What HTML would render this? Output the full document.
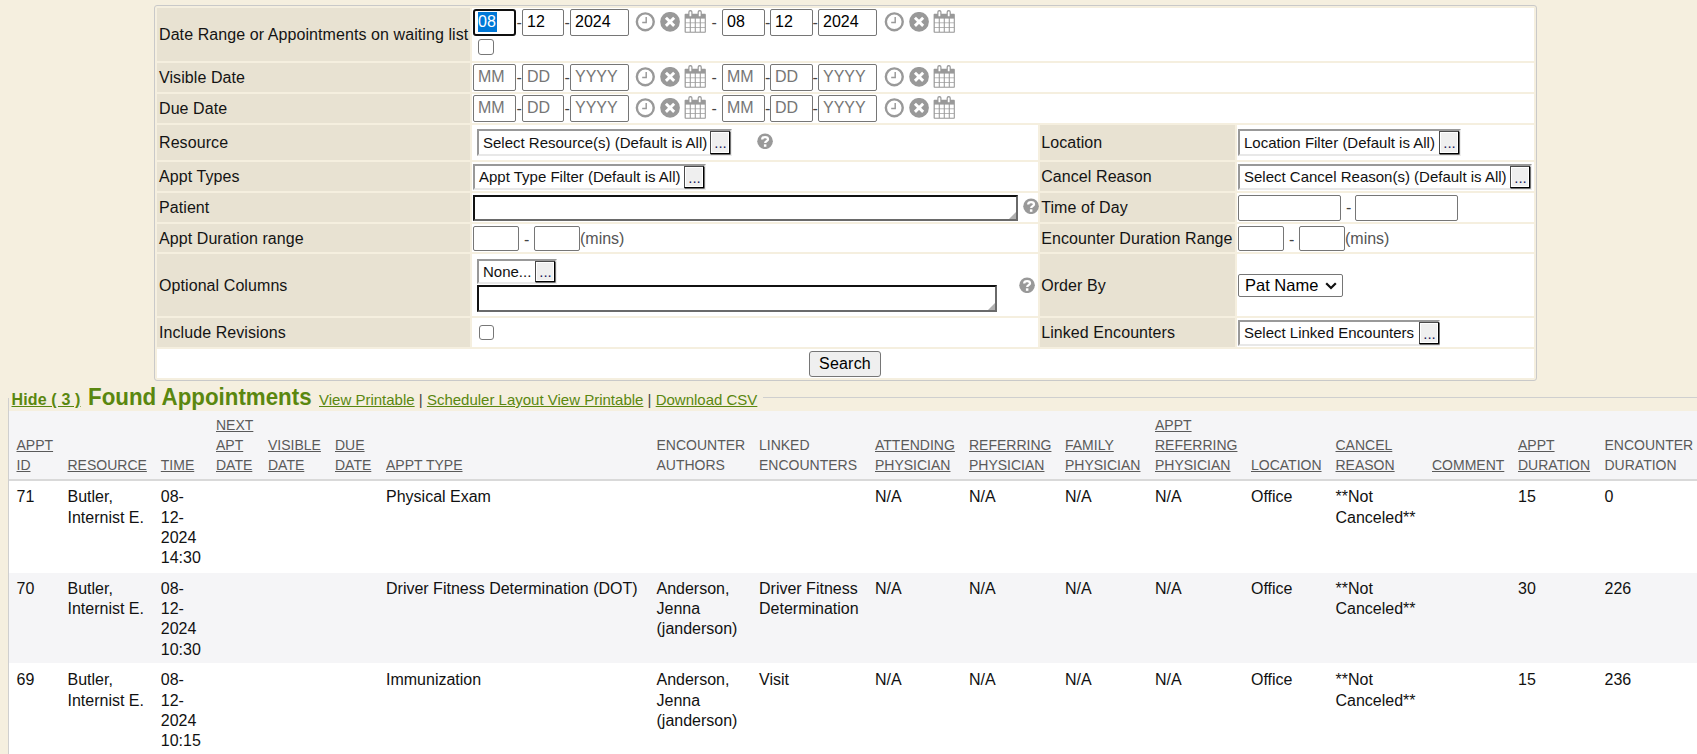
<!DOCTYPE html><html><head><meta charset="utf-8"><style>
*{box-sizing:border-box}
html,body{margin:0;padding:0}
body{width:1697px;height:754px;overflow:hidden;position:relative;background:#f5efdf;font-family:"Liberation Sans",sans-serif;color:#111}
.a{position:absolute}
.frm{position:absolute;left:154px;top:5px;width:1383px;height:376px;border:1px solid #c9c9c9;border-radius:3px;background:#f5efdf}
.lab{position:absolute;background:#e8e2d2;font-size:16px;padding-left:2px;letter-spacing:0.08px;display:flex;align-items:center;white-space:nowrap;color:#141414}
.val{position:absolute;background:#fff}
.inp{position:absolute;border:1px solid #767676;border-radius:2px;background:#fff;font-size:16px;line-height:23px;padding-left:4px;color:#000;white-space:nowrap;overflow:hidden}
.ph{color:#767676}
.dash{position:absolute;font-size:16px;line-height:16px;color:#444}
.wid{position:absolute;border-top:2px solid #999;border-left:2px solid #999;border-right:2px solid #eee;border-bottom:2px solid #e8e8e8;background:#fff;font-size:15px;white-space:nowrap;color:#111}
.btn{position:absolute;background:#efefef;border-top:1px solid #4a4a4a;border-left:1px solid #4a4a4a;border-right:1px solid #000;border-bottom:1px solid #000;box-shadow:inset 1px 1px 0 #fff,inset -1px -1px 0 #fff,0.6px 0.6px 0 #222;font-size:15px;color:#1a1a5a;text-align:center;padding-left:1px}
.txa{position:absolute;border-top:2px solid #111;border-left:2px solid #111;border-right:2px solid #6a6a6a;border-bottom:2px solid #6a6a6a;background:#fff}
.cb{position:absolute;width:16px;height:16px;border:1.3px solid #777;border-radius:3px;background:#fff}
.ico{position:absolute}
.lnk{color:#5a870f;text-decoration:underline}
.th{position:absolute;font-size:14px;line-height:20px;color:#5a5a5a;white-space:nowrap}
.th u{text-decoration:underline}
.td{position:absolute;font-size:16px;line-height:20.33px;color:#111;white-space:nowrap}
</style></head><body>
<div class="frm"></div>
<div class="lab" style="left:157px;top:8px;width:313px;height:53px;">Date Range or Appointments on waiting list</div>
<div class="val" style="left:472px;top:8px;width:1062px;height:53px"></div>
<div class="lab" style="left:157px;top:63px;width:313px;height:29px;">Visible Date</div>
<div class="val" style="left:472px;top:63px;width:1062px;height:29px"></div>
<div class="lab" style="left:157px;top:94px;width:313px;height:29px;">Due Date</div>
<div class="val" style="left:472px;top:94px;width:1062px;height:29px"></div>
<div class="lab" style="left:157px;top:125px;width:313px;height:35px;">Resource</div>
<div class="val" style="left:472px;top:125px;width:566px;height:35px"></div>
<div class="lab" style="left:1040px;top:125px;width:195px;height:35px;padding-left:1.2px;">Location</div>
<div class="val" style="left:1237px;top:125px;width:297px;height:35px"></div>
<div class="lab" style="left:157px;top:162px;width:313px;height:29px;">Appt Types</div>
<div class="val" style="left:472px;top:162px;width:566px;height:29px"></div>
<div class="lab" style="left:1040px;top:162px;width:195px;height:29px;padding-left:1.2px;">Cancel Reason</div>
<div class="val" style="left:1237px;top:162px;width:297px;height:29px"></div>
<div class="lab" style="left:157px;top:193px;width:313px;height:29px;">Patient</div>
<div class="val" style="left:472px;top:193px;width:566px;height:29px"></div>
<div class="lab" style="left:1040px;top:193px;width:195px;height:29px;padding-left:1.2px;">Time of Day</div>
<div class="val" style="left:1237px;top:193px;width:297px;height:29px"></div>
<div class="lab" style="left:157px;top:224px;width:313px;height:28px;padding-top:1px;">Appt Duration range</div>
<div class="val" style="left:472px;top:224px;width:566px;height:28px"></div>
<div class="lab" style="left:1040px;top:224px;width:195px;height:28px;padding-left:1.2px;padding-top:1px;">Encounter Duration Range</div>
<div class="val" style="left:1237px;top:224px;width:297px;height:28px"></div>
<div class="lab" style="left:157px;top:254px;width:313px;height:62px;padding-top:1px;">Optional Columns</div>
<div class="val" style="left:472px;top:254px;width:566px;height:62px"></div>
<div class="lab" style="left:1040px;top:254px;width:195px;height:62px;padding-left:1.2px;padding-top:1px;">Order By</div>
<div class="val" style="left:1237px;top:254px;width:297px;height:62px"></div>
<div class="lab" style="left:157px;top:318px;width:313px;height:29px;">Include Revisions</div>
<div class="val" style="left:472px;top:318px;width:566px;height:29px"></div>
<div class="lab" style="left:1040px;top:318px;width:195px;height:29px;padding-left:1.2px;">Linked Encounters</div>
<div class="val" style="left:1237px;top:318px;width:297px;height:29px"></div>
<div class="val" style="left:157px;top:349px;width:1377px;height:29px"></div>
<div class="inp" style="left:473px;top:9px;width:43px;height:27px;border:2px solid #101010;border-radius:3px;padding-left:3px;line-height:21px"><span style="background:#0078d7;color:#fff;display:inline-block;height:20px;line-height:19px;vertical-align:top;margin-top:1px;padding-right:1px">08</span></div><div class="inp" style="left:522px;top:9px;width:42px;height:27px">12</div><div class="inp" style="left:570px;top:9px;width:59px;height:27px">2024</div><div class="dash" style="left:516.5px;top:15px">-</div><div class="dash" style="left:564.5px;top:15px">-</div><svg class="ico" style="left:635.0px;top:12px" width="21" height="21" viewBox="0 0 21 21"><circle cx="10.3" cy="9.8" r="8.45" fill="none" stroke="#999" stroke-width="2.4"/><path d="M11.2 5.1V10.5H7.2" fill="none" stroke="#999" stroke-width="1.45"/></svg><svg class="ico" style="left:660.0px;top:12px" width="21" height="21" viewBox="0 0 21 21"><circle cx="10.05" cy="9.8" r="9.85" fill="#999"/><path d="M5.95 5.7L14.15 13.9M14.15 5.7L5.95 13.9" stroke="#fff" stroke-width="2.9"/></svg><svg class="ico" style="left:684.0px;top:10px" width="23" height="24" viewBox="0 0 23 24"><rect x="0.6" y="3.84" width="21.25" height="18.86" fill="#999" rx="0.8"/><rect x="1.80" y="8.60" width="3.95" height="3.9" fill="#fff"/><rect x="6.80" y="8.60" width="3.95" height="3.9" fill="#fff"/><rect x="11.80" y="8.60" width="3.95" height="3.9" fill="#fff"/><rect x="16.80" y="8.60" width="3.95" height="3.9" fill="#fff"/><rect x="1.80" y="13.20" width="3.95" height="3.9" fill="#fff"/><rect x="6.80" y="13.20" width="3.95" height="3.9" fill="#fff"/><rect x="11.80" y="13.20" width="3.95" height="3.9" fill="#fff"/><rect x="16.80" y="13.20" width="3.95" height="3.9" fill="#fff"/><rect x="1.80" y="17.80" width="3.95" height="3.9" fill="#fff"/><rect x="6.80" y="17.80" width="3.95" height="3.9" fill="#fff"/><rect x="11.80" y="17.80" width="3.95" height="3.9" fill="#fff"/><rect x="16.80" y="17.80" width="3.95" height="3.9" fill="#fff"/><rect x="4.30" y="0" width="4.2" height="6.8" rx="2.0" fill="#999"/><rect x="5.50" y="1.6" width="1.8" height="4.6" rx="0.3" fill="#fff"/><rect x="13.60" y="0" width="4.2" height="6.8" rx="2.0" fill="#999"/><rect x="14.80" y="1.6" width="1.8" height="4.6" rx="0.3" fill="#fff"/></svg><div class="dash" style="left:711.5px;top:15px">-</div><div class="inp" style="left:722px;top:9px;width:43px;height:27px">08</div><div class="inp" style="left:770px;top:9px;width:43px;height:27px">12</div><div class="inp" style="left:818px;top:9px;width:59px;height:27px">2024</div><div class="dash" style="left:765.0px;top:15px">-</div><div class="dash" style="left:812.5px;top:15px">-</div><svg class="ico" style="left:883.5px;top:12px" width="21" height="21" viewBox="0 0 21 21"><circle cx="10.3" cy="9.8" r="8.45" fill="none" stroke="#999" stroke-width="2.4"/><path d="M11.2 5.1V10.5H7.2" fill="none" stroke="#999" stroke-width="1.45"/></svg><svg class="ico" style="left:908.5px;top:12px" width="21" height="21" viewBox="0 0 21 21"><circle cx="10.05" cy="9.8" r="9.85" fill="#999"/><path d="M5.95 5.7L14.15 13.9M14.15 5.7L5.95 13.9" stroke="#fff" stroke-width="2.9"/></svg><svg class="ico" style="left:932.5px;top:10px" width="23" height="24" viewBox="0 0 23 24"><rect x="0.6" y="3.84" width="21.25" height="18.86" fill="#999" rx="0.8"/><rect x="1.80" y="8.60" width="3.95" height="3.9" fill="#fff"/><rect x="6.80" y="8.60" width="3.95" height="3.9" fill="#fff"/><rect x="11.80" y="8.60" width="3.95" height="3.9" fill="#fff"/><rect x="16.80" y="8.60" width="3.95" height="3.9" fill="#fff"/><rect x="1.80" y="13.20" width="3.95" height="3.9" fill="#fff"/><rect x="6.80" y="13.20" width="3.95" height="3.9" fill="#fff"/><rect x="11.80" y="13.20" width="3.95" height="3.9" fill="#fff"/><rect x="16.80" y="13.20" width="3.95" height="3.9" fill="#fff"/><rect x="1.80" y="17.80" width="3.95" height="3.9" fill="#fff"/><rect x="6.80" y="17.80" width="3.95" height="3.9" fill="#fff"/><rect x="11.80" y="17.80" width="3.95" height="3.9" fill="#fff"/><rect x="16.80" y="17.80" width="3.95" height="3.9" fill="#fff"/><rect x="4.30" y="0" width="4.2" height="6.8" rx="2.0" fill="#999"/><rect x="5.50" y="1.6" width="1.8" height="4.6" rx="0.3" fill="#fff"/><rect x="13.60" y="0" width="4.2" height="6.8" rx="2.0" fill="#999"/><rect x="14.80" y="1.6" width="1.8" height="4.6" rx="0.3" fill="#fff"/></svg>
<div class="inp ph" style="left:473px;top:64px;width:43px;height:27px">MM</div><div class="inp ph" style="left:522px;top:64px;width:42px;height:27px">DD</div><div class="inp ph" style="left:570px;top:64px;width:59px;height:27px">YYYY</div><div class="dash" style="left:516.5px;top:70px">-</div><div class="dash" style="left:564.5px;top:70px">-</div><svg class="ico" style="left:635.0px;top:67px" width="21" height="21" viewBox="0 0 21 21"><circle cx="10.3" cy="9.8" r="8.45" fill="none" stroke="#999" stroke-width="2.4"/><path d="M11.2 5.1V10.5H7.2" fill="none" stroke="#999" stroke-width="1.45"/></svg><svg class="ico" style="left:660.0px;top:67px" width="21" height="21" viewBox="0 0 21 21"><circle cx="10.05" cy="9.8" r="9.85" fill="#999"/><path d="M5.95 5.7L14.15 13.9M14.15 5.7L5.95 13.9" stroke="#fff" stroke-width="2.9"/></svg><svg class="ico" style="left:684.0px;top:65px" width="23" height="24" viewBox="0 0 23 24"><rect x="0.6" y="3.84" width="21.25" height="18.86" fill="#999" rx="0.8"/><rect x="1.80" y="8.60" width="3.95" height="3.9" fill="#fff"/><rect x="6.80" y="8.60" width="3.95" height="3.9" fill="#fff"/><rect x="11.80" y="8.60" width="3.95" height="3.9" fill="#fff"/><rect x="16.80" y="8.60" width="3.95" height="3.9" fill="#fff"/><rect x="1.80" y="13.20" width="3.95" height="3.9" fill="#fff"/><rect x="6.80" y="13.20" width="3.95" height="3.9" fill="#fff"/><rect x="11.80" y="13.20" width="3.95" height="3.9" fill="#fff"/><rect x="16.80" y="13.20" width="3.95" height="3.9" fill="#fff"/><rect x="1.80" y="17.80" width="3.95" height="3.9" fill="#fff"/><rect x="6.80" y="17.80" width="3.95" height="3.9" fill="#fff"/><rect x="11.80" y="17.80" width="3.95" height="3.9" fill="#fff"/><rect x="16.80" y="17.80" width="3.95" height="3.9" fill="#fff"/><rect x="4.30" y="0" width="4.2" height="6.8" rx="2.0" fill="#999"/><rect x="5.50" y="1.6" width="1.8" height="4.6" rx="0.3" fill="#fff"/><rect x="13.60" y="0" width="4.2" height="6.8" rx="2.0" fill="#999"/><rect x="14.80" y="1.6" width="1.8" height="4.6" rx="0.3" fill="#fff"/></svg><div class="dash" style="left:711.5px;top:70px">-</div><div class="inp ph" style="left:722px;top:64px;width:43px;height:27px">MM</div><div class="inp ph" style="left:770px;top:64px;width:43px;height:27px">DD</div><div class="inp ph" style="left:818px;top:64px;width:59px;height:27px">YYYY</div><div class="dash" style="left:765.0px;top:70px">-</div><div class="dash" style="left:812.5px;top:70px">-</div><svg class="ico" style="left:883.5px;top:67px" width="21" height="21" viewBox="0 0 21 21"><circle cx="10.3" cy="9.8" r="8.45" fill="none" stroke="#999" stroke-width="2.4"/><path d="M11.2 5.1V10.5H7.2" fill="none" stroke="#999" stroke-width="1.45"/></svg><svg class="ico" style="left:908.5px;top:67px" width="21" height="21" viewBox="0 0 21 21"><circle cx="10.05" cy="9.8" r="9.85" fill="#999"/><path d="M5.95 5.7L14.15 13.9M14.15 5.7L5.95 13.9" stroke="#fff" stroke-width="2.9"/></svg><svg class="ico" style="left:932.5px;top:65px" width="23" height="24" viewBox="0 0 23 24"><rect x="0.6" y="3.84" width="21.25" height="18.86" fill="#999" rx="0.8"/><rect x="1.80" y="8.60" width="3.95" height="3.9" fill="#fff"/><rect x="6.80" y="8.60" width="3.95" height="3.9" fill="#fff"/><rect x="11.80" y="8.60" width="3.95" height="3.9" fill="#fff"/><rect x="16.80" y="8.60" width="3.95" height="3.9" fill="#fff"/><rect x="1.80" y="13.20" width="3.95" height="3.9" fill="#fff"/><rect x="6.80" y="13.20" width="3.95" height="3.9" fill="#fff"/><rect x="11.80" y="13.20" width="3.95" height="3.9" fill="#fff"/><rect x="16.80" y="13.20" width="3.95" height="3.9" fill="#fff"/><rect x="1.80" y="17.80" width="3.95" height="3.9" fill="#fff"/><rect x="6.80" y="17.80" width="3.95" height="3.9" fill="#fff"/><rect x="11.80" y="17.80" width="3.95" height="3.9" fill="#fff"/><rect x="16.80" y="17.80" width="3.95" height="3.9" fill="#fff"/><rect x="4.30" y="0" width="4.2" height="6.8" rx="2.0" fill="#999"/><rect x="5.50" y="1.6" width="1.8" height="4.6" rx="0.3" fill="#fff"/><rect x="13.60" y="0" width="4.2" height="6.8" rx="2.0" fill="#999"/><rect x="14.80" y="1.6" width="1.8" height="4.6" rx="0.3" fill="#fff"/></svg>
<div class="inp ph" style="left:473px;top:95px;width:43px;height:27px">MM</div><div class="inp ph" style="left:522px;top:95px;width:42px;height:27px">DD</div><div class="inp ph" style="left:570px;top:95px;width:59px;height:27px">YYYY</div><div class="dash" style="left:516.5px;top:101px">-</div><div class="dash" style="left:564.5px;top:101px">-</div><svg class="ico" style="left:635.0px;top:98px" width="21" height="21" viewBox="0 0 21 21"><circle cx="10.3" cy="9.8" r="8.45" fill="none" stroke="#999" stroke-width="2.4"/><path d="M11.2 5.1V10.5H7.2" fill="none" stroke="#999" stroke-width="1.45"/></svg><svg class="ico" style="left:660.0px;top:98px" width="21" height="21" viewBox="0 0 21 21"><circle cx="10.05" cy="9.8" r="9.85" fill="#999"/><path d="M5.95 5.7L14.15 13.9M14.15 5.7L5.95 13.9" stroke="#fff" stroke-width="2.9"/></svg><svg class="ico" style="left:684.0px;top:96px" width="23" height="24" viewBox="0 0 23 24"><rect x="0.6" y="3.84" width="21.25" height="18.86" fill="#999" rx="0.8"/><rect x="1.80" y="8.60" width="3.95" height="3.9" fill="#fff"/><rect x="6.80" y="8.60" width="3.95" height="3.9" fill="#fff"/><rect x="11.80" y="8.60" width="3.95" height="3.9" fill="#fff"/><rect x="16.80" y="8.60" width="3.95" height="3.9" fill="#fff"/><rect x="1.80" y="13.20" width="3.95" height="3.9" fill="#fff"/><rect x="6.80" y="13.20" width="3.95" height="3.9" fill="#fff"/><rect x="11.80" y="13.20" width="3.95" height="3.9" fill="#fff"/><rect x="16.80" y="13.20" width="3.95" height="3.9" fill="#fff"/><rect x="1.80" y="17.80" width="3.95" height="3.9" fill="#fff"/><rect x="6.80" y="17.80" width="3.95" height="3.9" fill="#fff"/><rect x="11.80" y="17.80" width="3.95" height="3.9" fill="#fff"/><rect x="16.80" y="17.80" width="3.95" height="3.9" fill="#fff"/><rect x="4.30" y="0" width="4.2" height="6.8" rx="2.0" fill="#999"/><rect x="5.50" y="1.6" width="1.8" height="4.6" rx="0.3" fill="#fff"/><rect x="13.60" y="0" width="4.2" height="6.8" rx="2.0" fill="#999"/><rect x="14.80" y="1.6" width="1.8" height="4.6" rx="0.3" fill="#fff"/></svg><div class="dash" style="left:711.5px;top:101px">-</div><div class="inp ph" style="left:722px;top:95px;width:43px;height:27px">MM</div><div class="inp ph" style="left:770px;top:95px;width:43px;height:27px">DD</div><div class="inp ph" style="left:818px;top:95px;width:59px;height:27px">YYYY</div><div class="dash" style="left:765.0px;top:101px">-</div><div class="dash" style="left:812.5px;top:101px">-</div><svg class="ico" style="left:883.5px;top:98px" width="21" height="21" viewBox="0 0 21 21"><circle cx="10.3" cy="9.8" r="8.45" fill="none" stroke="#999" stroke-width="2.4"/><path d="M11.2 5.1V10.5H7.2" fill="none" stroke="#999" stroke-width="1.45"/></svg><svg class="ico" style="left:908.5px;top:98px" width="21" height="21" viewBox="0 0 21 21"><circle cx="10.05" cy="9.8" r="9.85" fill="#999"/><path d="M5.95 5.7L14.15 13.9M14.15 5.7L5.95 13.9" stroke="#fff" stroke-width="2.9"/></svg><svg class="ico" style="left:932.5px;top:96px" width="23" height="24" viewBox="0 0 23 24"><rect x="0.6" y="3.84" width="21.25" height="18.86" fill="#999" rx="0.8"/><rect x="1.80" y="8.60" width="3.95" height="3.9" fill="#fff"/><rect x="6.80" y="8.60" width="3.95" height="3.9" fill="#fff"/><rect x="11.80" y="8.60" width="3.95" height="3.9" fill="#fff"/><rect x="16.80" y="8.60" width="3.95" height="3.9" fill="#fff"/><rect x="1.80" y="13.20" width="3.95" height="3.9" fill="#fff"/><rect x="6.80" y="13.20" width="3.95" height="3.9" fill="#fff"/><rect x="11.80" y="13.20" width="3.95" height="3.9" fill="#fff"/><rect x="16.80" y="13.20" width="3.95" height="3.9" fill="#fff"/><rect x="1.80" y="17.80" width="3.95" height="3.9" fill="#fff"/><rect x="6.80" y="17.80" width="3.95" height="3.9" fill="#fff"/><rect x="11.80" y="17.80" width="3.95" height="3.9" fill="#fff"/><rect x="16.80" y="17.80" width="3.95" height="3.9" fill="#fff"/><rect x="4.30" y="0" width="4.2" height="6.8" rx="2.0" fill="#999"/><rect x="5.50" y="1.6" width="1.8" height="4.6" rx="0.3" fill="#fff"/><rect x="13.60" y="0" width="4.2" height="6.8" rx="2.0" fill="#999"/><rect x="14.80" y="1.6" width="1.8" height="4.6" rx="0.3" fill="#fff"/></svg>
<div class="cb" style="left:478px;top:39px"></div>
<div class="wid" style="left:477px;top:129px;width:255px;height:27px"><span class="a" style="left:4px;top:3px;line-height:17px">Select Resource(s) (Default is All)</span><div class="btn" style="left:231px;top:0px;width:20px;height:23px;line-height:22px">...</div></div>
<svg class="ico" style="left:757px;top:133px" width="16" height="16" viewBox="0 0 16 16"><circle cx="8.05" cy="8.3" r="7.8" fill="#999"/><path d="M5.2 6.4C5.2 4.8 6.6 4.2 8.1 4.2C9.8 4.2 11.0 5.0 11.0 6.4C11.0 8.0 8.2 8.3 8.2 10.0" fill="none" stroke="#fff" stroke-width="2.3"/><rect x="6.9" y="11.3" width="2.5" height="2.5" fill="#fff"/></svg>
<div class="wid" style="left:473px;top:164px;width:233px;height:26px"><span class="a" style="left:4px;top:2px;line-height:17px">Appt Type Filter (Default is All)</span><div class="btn" style="left:209px;top:0px;width:20px;height:22px;line-height:21px">...</div></div>
<div class="txa" style="left:473px;top:195px;width:545px;height:26px"><svg class="a" style="right:0;bottom:0" width="7" height="7"><path d="M7 0V7H0Z" fill="#b0b0b0"/></svg></div>
<svg class="ico" style="left:1022.7px;top:198.2px" width="16" height="16" viewBox="0 0 16 16"><circle cx="8.05" cy="8.3" r="7.8" fill="#999"/><path d="M5.2 6.4C5.2 4.8 6.6 4.2 8.1 4.2C9.8 4.2 11.0 5.0 11.0 6.4C11.0 8.0 8.2 8.3 8.2 10.0" fill="none" stroke="#fff" stroke-width="2.3"/><rect x="6.9" y="11.3" width="2.5" height="2.5" fill="#fff"/></svg>
<div class="inp" style="left:473px;top:226px;width:46px;height:25px"></div>
<div class="dash" style="left:524px;top:232px">-</div>
<div class="inp" style="left:534px;top:226px;width:46px;height:25px"></div>
<div class="a" style="left:580px;top:230px;font-size:16px;line-height:17px;color:#555">(mins)</div>
<div class="wid" style="left:477px;top:259px;width:80px;height:25px"><span class="a" style="left:4px;top:2px;line-height:17px">None...</span><div class="btn" style="left:56px;top:0px;width:20px;height:21px;line-height:20px">...</div></div>
<div class="txa" style="left:477px;top:285px;width:520px;height:27px"><svg class="a" style="right:0;bottom:0" width="7" height="7"><path d="M7 0V7H0Z" fill="#b0b0b0"/></svg></div>
<svg class="ico" style="left:1019px;top:277px" width="16" height="16" viewBox="0 0 16 16"><circle cx="8.05" cy="8.3" r="7.8" fill="#999"/><path d="M5.2 6.4C5.2 4.8 6.6 4.2 8.1 4.2C9.8 4.2 11.0 5.0 11.0 6.4C11.0 8.0 8.2 8.3 8.2 10.0" fill="none" stroke="#fff" stroke-width="2.3"/><rect x="6.9" y="11.3" width="2.5" height="2.5" fill="#fff"/></svg>
<div class="cb" style="left:478.6px;top:325px;width:15.3px;height:15px"></div>
<div class="wid" style="left:1238px;top:129px;width:223px;height:27px"><span class="a" style="left:4px;top:3px;line-height:17px">Location Filter (Default is All)</span><div class="btn" style="left:199px;top:0px;width:20px;height:23px;line-height:22px">...</div></div>
<div class="wid" style="left:1238px;top:164px;width:294px;height:26px"><span class="a" style="left:4px;top:2px;line-height:17px">Select Cancel Reason(s) (Default is All)</span><div class="btn" style="left:270px;top:0px;width:20px;height:22px;line-height:21px">...</div></div>
<div class="inp" style="left:1238px;top:195px;width:103px;height:26px"></div>
<div class="dash" style="left:1346px;top:200px">-</div>
<div class="inp" style="left:1355px;top:195px;width:103px;height:26px"></div>
<div class="inp" style="left:1238px;top:226px;width:46px;height:25px"></div>
<div class="dash" style="left:1289px;top:232px">-</div>
<div class="inp" style="left:1299px;top:226px;width:46px;height:25px"></div>
<div class="a" style="left:1345px;top:230px;font-size:16px;line-height:17px;color:#555">(mins)</div>
<div class="inp" style="left:1238px;top:274px;width:105px;height:23px;font-size:16.5px;line-height:21px;padding-left:6px">Pat Name</div>
<svg class="ico" style="left:1325px;top:282px" width="12" height="8" viewBox="0 0 12 8"><path d="M1.2 1.2L6 6L10.8 1.2" fill="none" stroke="#111" stroke-width="2.2"/></svg>
<div class="wid" style="left:1238px;top:320px;width:202px;height:26px"><span class="a" style="left:4px;top:2px;line-height:17px">Select Linked Encounters</span><div class="btn" style="left:179px;top:0px;width:20px;height:22px;line-height:21px">...</div></div>
<div class="a" style="left:809px;top:351px;width:72px;height:26px;border:1.5px solid #767676;border-radius:3px;background:#efefef;font-size:16px;line-height:23px;text-align:center;color:#000;letter-spacing:0.2px">Search</div>
<div class="a" style="left:8px;top:398px;width:1px;height:356px;background:#cfcfcf"></div>
<div class="a" style="left:763px;top:397px;width:934px;height:1px;background:#cfcfcf"></div>
<div class="a" style="left:9px;top:481px;width:1688px;height:273px;background:#fff"></div>
<div class="a" style="left:9px;top:411px;width:1688px;height:68px;background:#f5f5f7"></div>
<div class="a" style="left:9px;top:479px;width:1688px;height:2px;background:#d9d9d9"></div>
<div class="a" style="left:9px;top:573px;width:1688px;height:90px;background:#f5f5f7"></div>
<div class="a" style="left:11.5px;top:391px;font-size:16px;font-weight:bold;line-height:18px;white-space:nowrap;letter-spacing:0.15px"><span class="lnk">Hide ( 3 )</span></div>
<div class="a" style="left:88px;top:383.7px;font-size:23.6px;font-weight:bold;line-height:26px;color:#5a870f;white-space:nowrap;transform:scaleX(0.946);transform-origin:0 0">Found Appointments</div>
<div class="a" style="left:319px;top:391px;font-size:15px;line-height:17px;white-space:nowrap;color:#5a870f"><span class="lnk">View Printable</span> <span style="color:#444">|</span> <span class="lnk">Scheduler Layout View Printable</span> <span style="color:#444">|</span> <span class="lnk">Download CSV</span></div>
<div class="th" style="left:16.5px;top:435px"><u>APPT</u><br><u>ID</u></div>
<div class="th" style="left:67.5px;top:455px"><u>RESOURCE</u></div>
<div class="th" style="left:160.8px;top:455px"><u>TIME</u></div>
<div class="th" style="left:216px;top:415px"><u>NEXT</u><br><u>APT</u><br><u>DATE</u></div>
<div class="th" style="left:268px;top:435px"><u>VISIBLE</u><br><u>DATE</u></div>
<div class="th" style="left:335px;top:435px"><u>DUE</u><br><u>DATE</u></div>
<div class="th" style="left:386px;top:455px"><u>APPT TYPE</u></div>
<div class="th" style="left:656.5px;top:435px">ENCOUNTER<br>AUTHORS</div>
<div class="th" style="left:759px;top:435px">LINKED<br>ENCOUNTERS</div>
<div class="th" style="left:875px;top:435px"><u>ATTENDING</u><br><u>PHYSICIAN</u></div>
<div class="th" style="left:969px;top:435px"><u>REFERRING</u><br><u>PHYSICIAN</u></div>
<div class="th" style="left:1065px;top:435px"><u>FAMILY</u><br><u>PHYSICIAN</u></div>
<div class="th" style="left:1155px;top:415px"><u>APPT</u><br><u>REFERRING</u><br><u>PHYSICIAN</u></div>
<div class="th" style="left:1251px;top:455px"><u>LOCATION</u></div>
<div class="th" style="left:1335.5px;top:435px"><u>CANCEL</u><br><u>REASON</u></div>
<div class="th" style="left:1432px;top:455px"><u>COMMENT</u></div>
<div class="th" style="left:1518px;top:435px"><u>APPT</u><br><u>DURATION</u></div>
<div class="th" style="left:1604.5px;top:435px">ENCOUNTER<br>DURATION</div>
<div class="td" style="left:16.5px;top:487.3px">71</div>
<div class="td" style="left:67.5px;top:487.3px">Butler,<br>Internist E.</div>
<div class="td" style="left:160.8px;top:487.3px">08-<br>12-<br>2024<br>14:30</div>
<div class="td" style="left:386px;top:487.3px">Physical Exam</div>
<div class="td" style="left:875px;top:487.3px">N/A</div>
<div class="td" style="left:969px;top:487.3px">N/A</div>
<div class="td" style="left:1065px;top:487.3px">N/A</div>
<div class="td" style="left:1155px;top:487.3px">N/A</div>
<div class="td" style="left:1251px;top:487.3px">Office</div>
<div class="td" style="left:1335.5px;top:487.3px">**Not<br>Canceled**</div>
<div class="td" style="left:1518px;top:487.3px">15</div>
<div class="td" style="left:1604.5px;top:487.3px">0</div>
<div class="td" style="left:16.5px;top:578.8px">70</div>
<div class="td" style="left:67.5px;top:578.8px">Butler,<br>Internist E.</div>
<div class="td" style="left:160.8px;top:578.8px">08-<br>12-<br>2024<br>10:30</div>
<div class="td" style="left:386px;top:578.8px">Driver Fitness Determination (DOT)</div>
<div class="td" style="left:656.5px;top:578.8px">Anderson,<br>Jenna<br>(janderson)</div>
<div class="td" style="left:759px;top:578.8px">Driver Fitness<br>Determination</div>
<div class="td" style="left:875px;top:578.8px">N/A</div>
<div class="td" style="left:969px;top:578.8px">N/A</div>
<div class="td" style="left:1065px;top:578.8px">N/A</div>
<div class="td" style="left:1155px;top:578.8px">N/A</div>
<div class="td" style="left:1251px;top:578.8px">Office</div>
<div class="td" style="left:1335.5px;top:578.8px">**Not<br>Canceled**</div>
<div class="td" style="left:1518px;top:578.8px">30</div>
<div class="td" style="left:1604.5px;top:578.8px">226</div>
<div class="td" style="left:16.5px;top:670.3px">69</div>
<div class="td" style="left:67.5px;top:670.3px">Butler,<br>Internist E.</div>
<div class="td" style="left:160.8px;top:670.3px">08-<br>12-<br>2024<br>10:15</div>
<div class="td" style="left:386px;top:670.3px">Immunization</div>
<div class="td" style="left:656.5px;top:670.3px">Anderson,<br>Jenna<br>(janderson)</div>
<div class="td" style="left:759px;top:670.3px">Visit</div>
<div class="td" style="left:875px;top:670.3px">N/A</div>
<div class="td" style="left:969px;top:670.3px">N/A</div>
<div class="td" style="left:1065px;top:670.3px">N/A</div>
<div class="td" style="left:1155px;top:670.3px">N/A</div>
<div class="td" style="left:1251px;top:670.3px">Office</div>
<div class="td" style="left:1335.5px;top:670.3px">**Not<br>Canceled**</div>
<div class="td" style="left:1518px;top:670.3px">15</div>
<div class="td" style="left:1604.5px;top:670.3px">236</div>
</body></html>
